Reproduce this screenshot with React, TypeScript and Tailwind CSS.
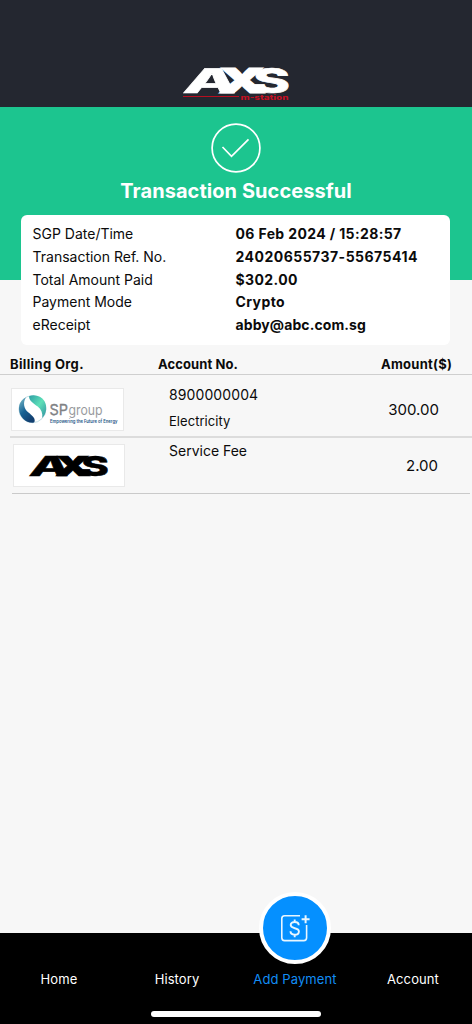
import clsx from "clsx";

const details = [
  { label: "SGP Date/Time", value: "06 Feb 2024 / 15:28:57", spacing: "tracking-[0.37px]" },
  { label: "Transaction Ref. No.", value: "24020655737-55675414", spacing: "tracking-[0.48px]" },
  { label: "Total Amount Paid", value: "$302.00", spacing: "tracking-[0.4px]" },
  { label: "Payment Mode", value: "Crypto", spacing: "tracking-[0.4px]" },
  { label: "eReceipt", value: "abby@abc.com.sg", spacing: "tracking-[0.1px]" },
];

const tabs = ["Home", "History", "Add Payment", "Account"];

function AxsLogo({ className }: { className?: string }) {
  return (
    <svg
      viewBox="0 0 106 26"
      preserveAspectRatio="none"
      className={clsx("overflow-visible fill-current stroke-current font-['Inter',sans-serif]", className)}
      fontSize="34"
    >
      <text
        transform="translate(-1 25.5) skewX(-10)"
        textLength="54"
        lengthAdjust="spacingAndGlyphs"
        fontWeight="800"
        strokeWidth="0.5"
      >
        A
      </text>
      <text
        transform="translate(35 25.5)"
        textLength="48"
        lengthAdjust="spacingAndGlyphs"
        fontWeight="900"
        strokeWidth="0.8"
      >
        X
      </text>
      <text
        transform="translate(70 25.5)"
        textLength="37"
        lengthAdjust="spacingAndGlyphs"
        fontWeight="800"
        strokeWidth="0.6"
      >
        S
      </text>
    </svg>
  );
}

function SpLogo() {
  return (
    <svg viewBox="0 0 111 41" className="h-[41px] w-[111px] overflow-visible font-['Inter',sans-serif]">
      <defs>
        <linearGradient id="globeDark" x1="0" y1="0" x2="0.6" y2="1">
          <stop offset="0" stopColor="#7fbfca" />
          <stop offset="0.55" stopColor="#176294" />
          <stop offset="1" stopColor="#123f70" />
        </linearGradient>
        <linearGradient id="globeLight" x1="0" y1="0" x2="1" y2="1">
          <stop offset="0" stopColor="#2f9fa5" />
          <stop offset="0.5" stopColor="#5ee0b8" />
          <stop offset="1" stopColor="#2f8fa0" />
        </linearGradient>
      </defs>
      {/* globe */}
      <circle cx="20.4" cy="20.2" r="13.5" fill="#fff" stroke="#9cc9d3" strokeWidth="0.6" />
      <path
        d="M14 8.2C9.3 10.6 6.8 15 7 20.3C7.3 28 13.3 33.6 20.3 33.8C21.5 33.8 22.3 33.3 22.7 32.3C23.2 29 20 26.6 16.5 23.6C11.5 19.3 10.8 13.3 14 8.2Z"
        fill="url(#globeDark)"
      />
      <path
        d="M17.2 7C23.5 5.2 29.3 7.3 32.4 12C35.6 17.5 34.5 25 30.2 29C30.9 24.2 29.3 20.5 25.7 17.6C21.8 14.4 16.3 11.3 17.2 7Z"
        fill="url(#globeLight)"
      />
      <text
        x="37.5"
        y="25.5"
        fontSize="15"
        textLength="18.5"
        lengthAdjust="spacingAndGlyphs"
        fill="#808285"
        stroke="#808285"
        strokeWidth="0.3"
      >
        SP
      </text>
      <text x="56.5" y="25.5" fontSize="14" textLength="34" lengthAdjust="spacingAndGlyphs" fill="#999b9e">
        group
      </text>
      <text x="38" y="33.5" fontSize="5" fontWeight="600" textLength="67.5" lengthAdjust="spacingAndGlyphs" fill="#1b5484">
        Empowering the Future of Energy
      </text>
    </svg>
  );
}

function PaymentIcon() {
  return (
    <svg viewBox="0 0 30 30" fill="none" stroke="#e9f6ff" strokeWidth="1.6" className="size-[30px]">
      <path d="M20 2.8H4.6a2.8 2.8 0 0 0-2.8 2.8v19.2a2.8 2.8 0 0 0 2.8 2.8h19.2a2.8 2.8 0 0 0 2.8-2.8V12" />
      <path d="M25.6 2.3v8M21.6 6.3h8" strokeWidth="2" />
      <path
        d="M18.7 12.2c0-2-1.7-3.2-4-3.2s-4 1.2-4 3.1c0 4.4 8.2 1.8 8.2 6.3 0 2-1.7 3.3-4.2 3.3s-4.2-1.3-4.2-3.4M14.7 6.6V9M14.7 21.7v2.5"
        strokeWidth="1.9"
      />
    </svg>
  );
}

export default function App() {
  return (
    <div className="flex h-[1024px] w-[472px] flex-col overflow-hidden bg-[#f7f7f7] font-['Inter',sans-serif] text-[#0b0b0b]">
      {/* App header */}
      <header className="flex h-[107px] shrink-0 flex-col items-center bg-[#242730] pt-[67px] text-white">
        <AxsLogo className="h-[26px] w-[106px]" />
        <svg viewBox="0 0 106 8" className="-mt-px h-2 w-[106px] overflow-visible font-['Inter',sans-serif]">
          <path d="M0 4.5H56" stroke="#b80f20" strokeWidth="1.2" />
          <text
            x="57.5"
            y="7.6"
            fontSize="7"
            fontWeight="800"
            textLength="48"
            lengthAdjust="spacingAndGlyphs"
            fill="#c41022"
          >
            m-station
          </text>
        </svg>
      </header>

      {/* Status banner */}
      <section className="flex h-[173px] shrink-0 flex-col items-center bg-[#1cc58f] pt-4 text-white">
        <svg viewBox="0 0 50 50" fill="none" stroke="currentColor" strokeWidth="1.7" className="size-[50px]">
          <circle cx="25" cy="25" r="23.9" />
          <path d="M11.5 24l9 9.3L37.5 16.3" />
        </svg>
        <h1 className="mt-1 text-[20px] leading-7 font-bold tracking-[0.06px] whitespace-nowrap">
          Transaction Successful
        </h1>
      </section>

      {/* Transaction details */}
      <section className="mx-auto -mt-[65px] h-[130px] w-[429px] shrink-0 -translate-x-px rounded-md bg-white pt-[8.2px] pl-3">
        {details.map(({ label, value, spacing }) => (
          <div key={label} className="flex text-[14px] leading-[22.75px] whitespace-nowrap">
            <span className="w-[203px]">{label}</span>
            <span className={clsx("font-bold", spacing)}>{value}</span>
          </div>
        ))}
      </section>

      {/* Billing items */}
      <section>
        <div className="flex h-[30px] border-b border-[#cfcfcf] pt-[9px] pl-[10px] text-[13px] leading-5 font-bold">
          <span className="w-[148px] tracking-[0.35px]">Billing Org.</span>
          <span className="w-[223px] tracking-[0.1px]">Account No.</span>
          <span className="tracking-[0.25px]">Amount($)</span>
        </div>
        <div className="ml-[10px] flex h-[63px] border-b-2 border-[#dcdcdc]">
          <div className="mt-[13px] ml-px flex h-[43px] w-[113px] items-center justify-center border border-[#e9e9e9] bg-white">
            <SpLogo />
          </div>
          <div className="ml-[45px] flex flex-col pt-[10px]">
            <span className="text-[14px] leading-5 tracking-[0.1px]">8900000004</span>
            <span className="mt-1.5 text-[13px] leading-5 tracking-[0.05px]">Electricity</span>
          </div>
          <span className="mt-[25px] mr-[33px] ml-auto text-[15px] leading-5">300.00</span>
        </div>
        <div className="mr-0.5 ml-3 flex h-[56px] border-b border-[#cacaca]">
          <div className="mt-[6px] ml-px flex h-[43px] w-[112px] items-center justify-center border border-[#e9e9e9] bg-white text-black">
            <AxsLogo className="h-[21px] w-[79px] -translate-x-px" />
          </div>
          <span className="mt-[3px] ml-11 text-[14px] leading-5">Service Fee</span>
          <span className="mt-[18px] mr-8 ml-auto text-[15px] leading-5">2.00</span>
        </div>
      </section>

      {/* Tab bar */}
      <nav className="mt-auto flex h-[91px] shrink-0 flex-col items-center bg-black text-white">
        <div className="grid h-[77.5px] w-full grid-cols-4">
          {tabs.map((tab) => (
            <div
              key={tab}
              className={clsx(
                "relative flex justify-center pt-9 text-[13px] leading-5 tracking-[0.1px] whitespace-nowrap",
                tab === "Add Payment" && "text-[#128df5]"
              )}
            >
              {tab === "Add Payment" && (
                <div className="absolute -top-[41px] flex size-[72px] items-center justify-center rounded-full border-[4.5px] border-white bg-[#0590ff]">
                  <PaymentIcon />
                </div>
              )}
              {tab}
            </div>
          ))}
        </div>
        <div className="h-1.5 w-[170px] rounded-full bg-white" />
      </nav>
    </div>
  );
}
